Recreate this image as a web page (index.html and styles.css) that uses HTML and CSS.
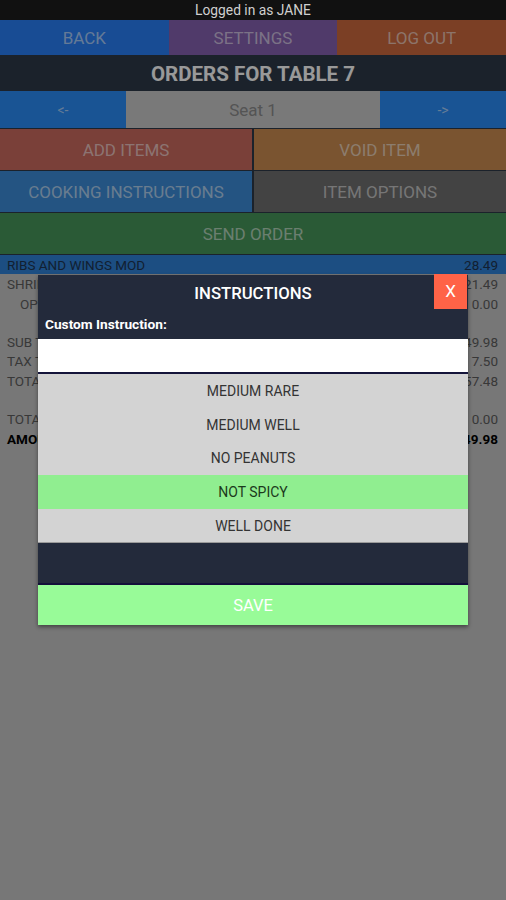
FILE: index.html
```html
<!DOCTYPE html>
<html lang="en">
<head>
	<meta charset="UTF-8">
	<meta name="viewport" content="width=device-width, initial-scale=1.0">
	<title>Orders for table 7</title>
	<link rel="stylesheet" href="styles.css">
</head>
<body>
	<div class="status">Logged in as JANE</div>
	<div class="page">
		<div class="top_btns">
			<div class="btn back">BACK</div>
			<div class="btn settings">SETTINGS</div>
			<div class="btn logout">LOG OUT</div>
		</div>
		<div class="title">ORDERS FOR TABLE 7</div>
		<div class="seat_row">
			<div class="btn arrow">&lt;-</div>
			<div class="seat">Seat 1</div>
			<div class="btn arrow">-&gt;</div>
		</div>
		<div class="actions">
			<div class="btn add">ADD ITEMS</div>
			<div class="btn void">VOID ITEM</div>
			<div class="btn cook">COOKING INSTRUCTIONS</div>
			<div class="btn opts">ITEM OPTIONS</div>
			<div class="btn send">SEND ORDER</div>
		</div>
		<ul class="items">
			<li class="sel"><span>RIBS AND WINGS MOD</span><span>28.49</span></li>
			<li><span>SHRIMP BASKET</span><span>21.49</span></li>
			<li class="opt"><span>OPTION: NONE</span><span>0.00</span></li>
			<li></li>
			<li><span>SUB TOTAL</span><span>49.98</span></li>
			<li><span>TAX TOTAL</span><span>7.50</span></li>
			<li><span>TOTAL</span><span>57.48</span></li>
			<li></li>
			<li><span>TOTAL PAID</span><span>0.00</span></li>
			<li class="due"><span>AMOUNT DUE</span><span>49.98</span></li>
		</ul>
	</div>

	<div class="dim"></div>

	<div class="modal">
		<div class="modal_head">
			<div class="modal_title">INSTRUCTIONS</div>
			<div class="close">X</div>
		</div>
		<div class="label">Custom Instruction:</div>
		<div class="input"></div>
		<ul class="choices">
			<li>MEDIUM RARE</li>
			<li>MEDIUM WELL</li>
			<li>NO PEANUTS</li>
			<li class="picked">NOT SPICY</li>
			<li>WELL DONE</li>
		</ul>
		<div class="spacer"></div>
		<div class="save">SAVE</div>
	</div>
</body>
</html>
```

FILE: styles.css
```css
body,ul{
	margin:0;
	padding:0;
}

body{
	width:506px;
	height:900px;
	background-color:#c6c6c6;
	font-family:Roboto, "Liberation Sans", sans-serif;
	position:relative;
	overflow:hidden;
}

.status{
	height:20px;
	line-height:20px;
	background-color:#111;
	color:#cfcfcf;
	font-size:13.8px;
	text-align:center;
	position:relative;
	z-index:2;
}

.btn{
	display:flex;
	align-items:center;
	justify-content:center;
	color:rgba(255,255,255,0.6);
	font-size:17px;
}

.top_btns{
	display:grid;
	grid-template-columns:1fr 1fr 1fr;
	height:35px;
}
.back{ background-color:#287ff7; }
.settings{ background-color:#8561b1; }
.logout{ background-color:#cd693f; }

.title{
	height:36px;
	line-height:38px;
	background-color:#2d3a49;
	color:#fff;
	font-size:20.5px;
	font-weight:bold;
	text-align:center;
}

.seat_row{
	display:grid;
	grid-template-columns:126px 1fr 126px;
	height:37px;
	background-color:#2d3a49;
}
.arrow{
	background-color:#2b8cf7;
	font-size:14px;
}
.seat{
	display:flex;
	align-items:center;
	justify-content:center;
	background-color:#cacaca;
	color:#8c8c8c;
	font-size:17px;
}

.actions{
	display:grid;
	grid-template-columns:252px 1fr;
	grid-template-rows:41px 41px 41px;
	gap:1px 2px;
	padding:1px 0;
	background-color:#2d3a49;
}
.add{ background-color:#cb6b5f; }
.void{ background-color:#cb8c50; }
.cook{ background-color:#3c8cd9; }
.opts{ background-color:#717171; }
.send{
	background-color:#46965a;
	grid-column:1 / 3;
}

.items{
	list-style:none;
	font-size:13.5px;
	color:#5e5e5e;
}
.items li{
	display:flex;
	justify-content:space-between;
	height:19.3px;
	line-height:20px;
	padding:0 8px 0 7px;
}
.items .sel{
	background-color:#2f82d9;
	color:#1e3552;
}
.items .opt{
	padding-left:20px;
}
.items .due{
	font-weight:bold;
	color:#000;
}

.dim{
	position:absolute;
	left:0;
	top:20px;
	right:0;
	bottom:0;
	background-color:rgba(0,0,0,0.4);
}

.modal{
	position:absolute;
	left:38px;
	top:275px;
	width:430px;
	background-color:#232a3b;
	box-shadow:0 2px 4px rgba(0,0,0,0.45);
}

.modal_head{
	display:flex;
	justify-content:center;
	position:relative;
	height:37px;
}
.modal_title{
	color:#fff;
	font-size:16.7px;
	font-weight:500;
	line-height:37px;
}
.close{
	position:absolute;
	right:1px;
	top:-1px;
	width:33px;
	height:35px;
	line-height:35px;
	background-color:#ff6347;
	color:#fff;
	font-size:17px;
	text-align:center;
}

.label{
	height:27px;
	line-height:25px;
	padding-left:7px;
	color:#fff;
	font-size:13.7px;
	font-weight:bold;
}

.input{
	height:33px;
	background-color:#fff;
	border-bottom:2px solid #14143a;
}

.choices{
	list-style:none;
	background-color:#d3d3d3;
	border-bottom:1px solid #9a9a9a;
}
.choices li{
	height:33.7px;
	line-height:34px;
	text-align:center;
	font-size:14px;
	color:#333;
}
.choices .picked{
	background-color:#90ee90;
	color:#1c3a1c;
}

.spacer{
	height:40px;
	border-bottom:2px solid #14103a;
}

.save{
	height:40px;
	line-height:41px;
	background-color:#98fb98;
	color:#fff;
	font-size:16.5px;
	text-align:center;
}
```
